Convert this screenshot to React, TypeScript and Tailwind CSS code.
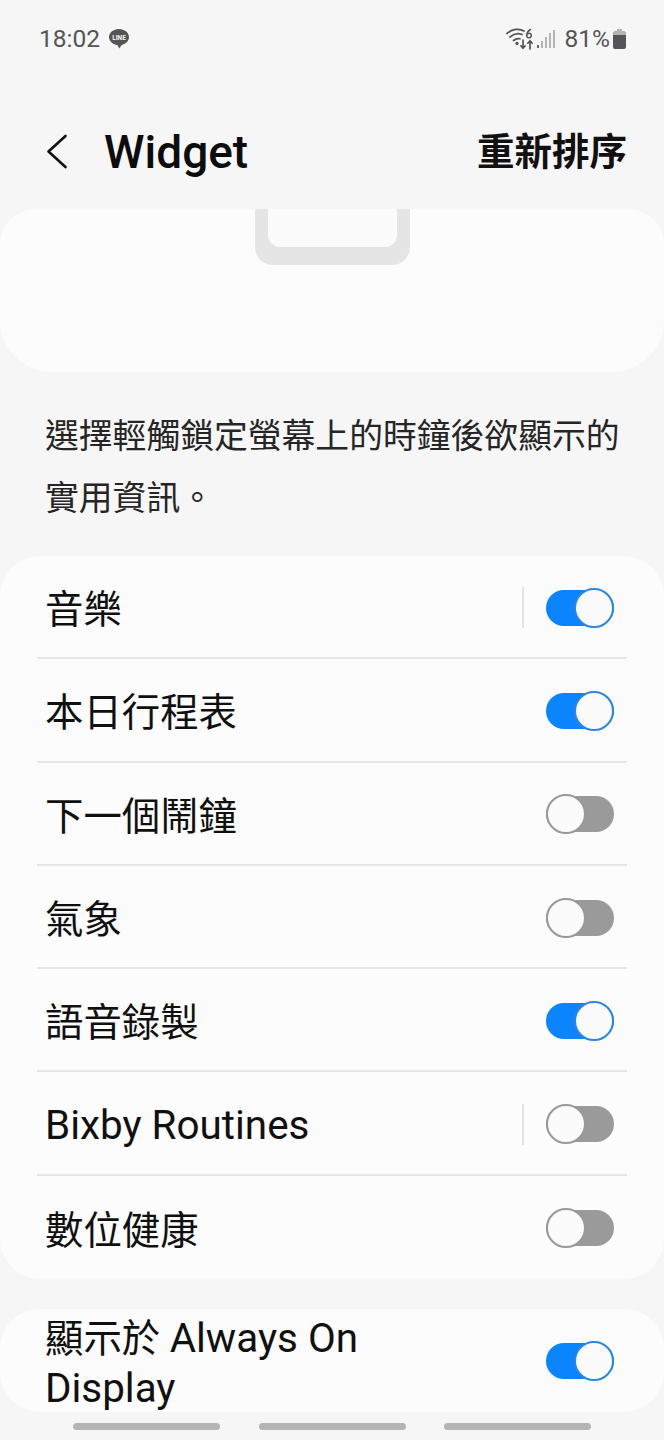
const cjk = "font-['Roboto','Noto_Sans_CJK_TC',sans-serif]";

function Toggle({ on }: { on: boolean }) {
  return (
    <div className={`relative h-[36px] w-[68px] rounded-full ${on ? 'bg-[#0a84ff]' : 'bg-[#9a9a9a]'}`}>
      <div
        className={`absolute top-[-2px] h-[40px] w-[40px] rounded-full border-2 bg-[#fbfbfb] ${
          on ? 'right-0 border-[#2a86e0]' : 'left-0 border-[#999999]'
        }`}
      />
    </div>
  );
}

type Item = { label: string; on: boolean; divider?: boolean; latin?: boolean };

const items: Item[] = [
  { label: '音樂', on: true, divider: true },
  { label: '本日行程表', on: true },
  { label: '下一個鬧鐘', on: false },
  { label: '氣象', on: false },
  { label: '語音錄製', on: true },
  { label: 'Bixby Routines', on: false, divider: true, latin: true },
  { label: '數位健康', on: false },
];

function StatusBar() {
  return (
    <div className="flex h-[78px] items-center justify-between pl-[39px] pr-[38px] text-[#555555]">
      <div className="flex items-center gap-[8px]">
        <span className="text-[24.500px] leading-none">18:02</span>
        <svg width="22" height="22" viewBox="0 0 22 22">
          <path d="M11 1C5.500 1 1 4.600 1 9.100c0 4.300 4 7.600 8.600 8.100l1.600 3.300 2.500-3.600C17.800 16.100 21 13 21 9.100 21 4.600 16.500 1 11 1z" fill="#555555" />
          <text x="11" y="11.500" textAnchor="middle" fontSize="6.500" fontWeight="700" fill="#f6f6f6" fontFamily="Roboto, sans-serif">LINE</text>
        </svg>
      </div>
      <div className="flex items-center">
        <svg width="28" height="24" viewBox="0 0 28 24" fill="none" stroke="#555555" strokeWidth="1.700" strokeLinecap="round">
          <path d="M1 6.500C6 2 13 1 18 4" />
          <path d="M4 10C8 6.500 12 6 16 7.500" />
          <path d="M7.500 13.500C10 11.500 12 11.200 14 11.800" />
          <circle cx="11" cy="16.500" r="0.800" fill="#555555" />
          <path d="M17 13v8M14.800 18.800l2.200 2.400 2.200-2.400" />
          <path d="M24 22v-8M21.800 16.200l2.200-2.400 2.200 2.400" />
          <circle cx="23" cy="8.500" r="2.300" strokeWidth="1.400" />
          <path d="M24.500 2.500C22.500 3.500 21 5.500 20.800 8" strokeWidth="1.400" />
        </svg>
        <svg className="ml-[3px]" width="19" height="20" viewBox="0 0 19 20" fill="#b5b5b5">
          <rect x="0" y="16" width="2" height="3" fill="#666666" />
          <rect x="4" y="12" width="2" height="7" />
          <rect x="8" y="8" width="2" height="11" />
          <rect x="12" y="4" width="2" height="15" />
          <rect x="16" y="1" width="2" height="18" />
        </svg>
        <span className="ml-[9px] text-[24.500px] leading-none">81%</span>
        <svg className="ml-[3px]" width="13" height="20" viewBox="0 0 13 20">
          <path d="M4 0.500h5v2h2a2 2 0 0 1 2 2V18a2 2 0 0 1-2 2H2a2 2 0 0 1-2-2V4.500a2 2 0 0 1 2-2h2z" fill="#555555" />
          <path d="M4 0.500h5v2h2a2 2 0 0 1 2 2V6H0V4.500a2 2 0 0 1 2-2h2z" fill="#b5b5b5" />
        </svg>
      </div>
    </div>
  );
}

export default function App() {
  return (
    <div className={`flex h-[1440px] w-[664px] flex-col overflow-hidden bg-[#f6f6f6] text-[#101010] ${cjk}`}>
      <StatusBar />

      <div className="flex h-[131px] items-start justify-between pl-[46px] pr-[37px] pt-[43px]">
        <div className="flex items-center">
          <svg width="22" height="36" viewBox="0 0 22 36" fill="none" stroke="#111111" strokeWidth="2.600" strokeLinecap="round" strokeLinejoin="round">
            <path d="M19.500 2 2.500 17.500 19.500 33" />
          </svg>
          <span className="ml-[36px] pt-[1px] text-[46px] font-medium leading-[60px] text-[#0c0c0c]">Widget</span>
        </div>
        <span className="pt-[1px] text-[37.500px] font-bold leading-[60px] text-[#111111]">重新排序</span>
      </div>

      <div className="h-[163px] overflow-hidden rounded-[52px] rounded-t-[36px] bg-[#fcfcfc]">
        <div className="mx-auto h-[56px] w-[155px] rounded-b-[18px] bg-[#e5e5e5] px-[13px] pb-[18px]">
          <div className="h-full w-full rounded-b-[12px] bg-[#fbfbfb]" />
        </div>
      </div>

      <p className="ml-[45px] mt-[34px] w-[590px] text-[33.800px] leading-[61.500px] text-[#252525]">
        選擇輕觸鎖定螢幕上的時鐘後欲顯示的實用資訊。
      </p>

      <div className="mt-[27px] flex flex-col rounded-[40px] bg-[#fcfcfc] px-[37px]">
        {items.map((item, i) => (
          <div
            key={item.label}
            className={`flex h-[103.300px] items-center justify-between pl-[8px] pr-[13px] pt-[2px] ${
              i < items.length - 1 ? 'border-b-2 border-[#e6e6e6]' : ''
            }`}
          >
            <span className={`pt-[5px] leading-none ${item.latin ? 'text-[40.400px]' : 'text-[38.400px]'}`}>
              {item.label}
            </span>
            <div className="flex items-center">
              {item.divider && <div className="mr-[22px] h-[41px] w-[2px] bg-[#e4e4e4]" />}
              <Toggle on={item.on} />
            </div>
          </div>
        ))}
      </div>

      <div className="mt-[30px] flex h-[103px] items-center justify-between overflow-hidden rounded-[40px] bg-[#fcfcfc] pl-[45px] pr-[50px]">
        <span className="w-[340px] pt-[7px] text-[38.400px] leading-[50px]">
          顯示於 <span className="text-[40.400px]">Always On</span> <span className="text-[40.400px]">Display</span>
        </span>
        <Toggle on />
      </div>

      <div className="mt-[11px] flex justify-between pl-[73px] pr-[73px]">
        <div className="h-[7px] w-[147px] rounded-full bg-[#b4b4b4]" />
        <div className="h-[7px] w-[147px] rounded-full bg-[#b4b4b4]" />
        <div className="h-[7px] w-[147px] rounded-full bg-[#b4b4b4]" />
      </div>
    </div>
  );
}
